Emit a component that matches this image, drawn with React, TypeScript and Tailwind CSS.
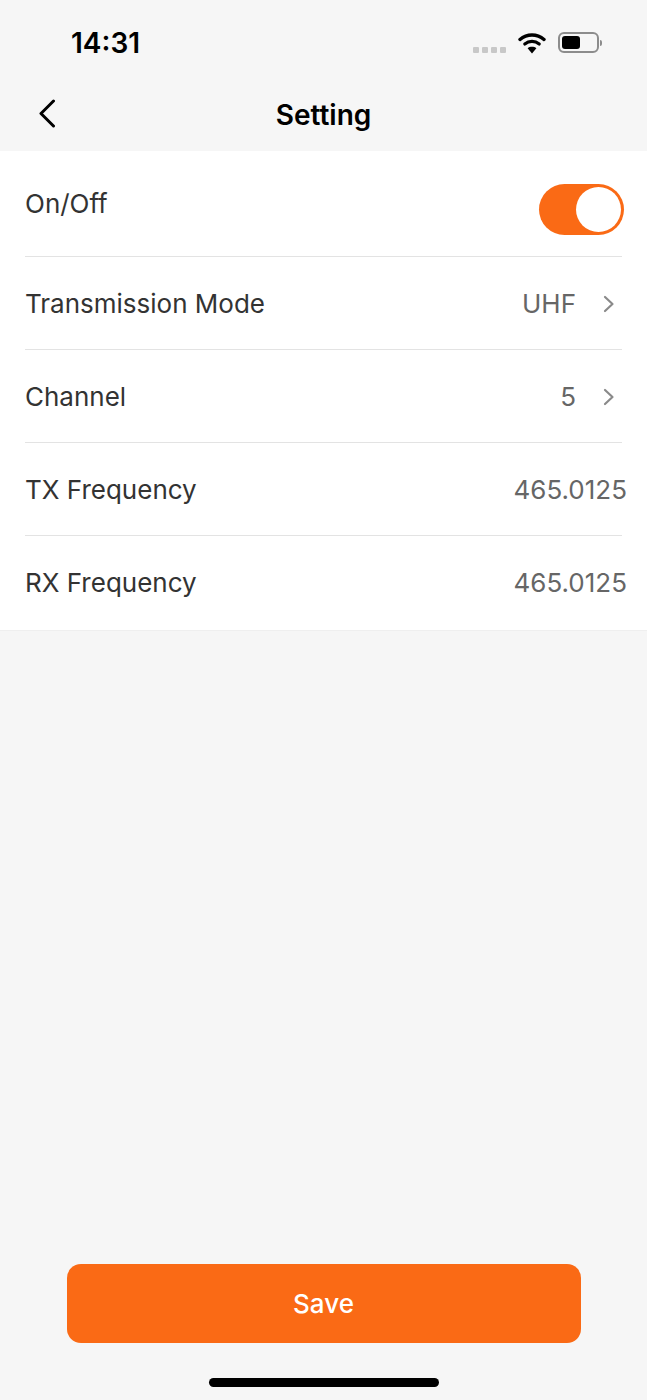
const rows = [
  { label: "Transmission Mode", value: "UHF", arrow: true },
  { label: "Channel", value: "5", arrow: true },
  { label: "TX Frequency", value: "465.0125", arrow: false },
  { label: "RX Frequency", value: "465.0125", arrow: false },
];

function Chevron() {
  return (
    <svg width="12" height="18" viewBox="0 0 12 18" fill="none" className="ml-[27px] mr-[9px]">
      <path d="M2 2 L9.5 9 L2 16" stroke="#8a8a8a" strokeWidth="2.2" strokeLinecap="round" strokeLinejoin="round" />
    </svg>
  );
}

function StatusIcons() {
  return (
    <div className="flex items-center">
      <div className="flex gap-[3px] mt-[14px]">
        <span className="w-[6px] h-[6px] rounded-[1px] bg-[#c8c8c8]" />
        <span className="w-[6px] h-[6px] rounded-[1px] bg-[#c8c8c8]" />
        <span className="w-[6px] h-[6px] rounded-[1px] bg-[#c8c8c8]" />
        <span className="w-[6px] h-[6px] rounded-[1px] bg-[#c8c8c8]" />
      </div>
      <svg width="28" height="22" viewBox="0 0 28 22" fill="none" className="ml-[12px]">
        <path d="M2 7.5 C9 1.5 19 1.5 26 7.5" stroke="#000" strokeWidth="3.4" strokeLinecap="round" />
        <path d="M6.8 12 C11 8.6 17 8.6 21.2 12" stroke="#000" strokeWidth="3.2" strokeLinecap="round" />
        <path d="M14 21.5 L9.6 16.2 C12 14.4 16 14.4 18.4 16.2 Z" fill="#000" />
      </svg>
      <div className="ml-[12px] flex items-center">
        <div className="w-[41px] h-[21px] rounded-[6px] border-2 border-[#8c8c8c] p-[2px]">
          <div className="w-[18px] h-full rounded-[3px] bg-black" />
        </div>
        <div className="ml-[1px] w-[2px] h-[6px] rounded-r-[2px] bg-[#8c8c8c]" />
      </div>
    </div>
  );
}

export default function App() {
  return (
    <div className="h-[1400px] w-full flex flex-col bg-[#f6f6f6] font-['Inter','Liberation_Sans',sans-serif] overflow-hidden">
      <div className="h-[85px] flex items-center justify-between pl-[71px] pr-[45px]">
        <span className="text-[28px] font-semibold text-black">14:31</span>
        <StatusIcons />
      </div>
      <div className="h-[66px] relative flex items-center justify-center pb-[6px]">
        <svg width="18" height="30" viewBox="0 0 18 30" fill="none" className="absolute left-[38px] top-[14px]">
          <path d="M15.5 2 L3 14.5 L15.5 27" stroke="#000" strokeWidth="3" strokeLinecap="round" strokeLinejoin="round" />
        </svg>
        <span className="text-[28px] font-semibold text-black">Setting</span>
      </div>

      <div className="bg-white border-b border-[#efefef] pl-[25px]">
        <div className="h-[105px] pr-[23px] flex items-center justify-between">
          <span className="text-[26px] text-[#333333]">On/Off</span>
          <div className="mt-[12px] w-[85px] h-[51px] rounded-full bg-[#fa6a15] flex items-center justify-end pr-[3px]">
            <div className="w-[45px] h-[45px] rounded-full bg-white" />
          </div>
        </div>
        {rows.map((row, i) => (
          <div key={row.label}>
            <div className="h-px mr-[25px] bg-[#e3e3e3]" />
            <div className={`flex items-center justify-between ${i === 3 ? "h-[94px] pb-[1px]" : "h-[92px] pt-[1px]"}`}>
              <span className="text-[26px] text-[#333333]">{row.label}</span>
              {row.arrow ? (
                <div className="flex items-center pr-[23px]">
                  <span className="text-[26px] text-[#666666]">{row.value}</span>
                  <Chevron />
                </div>
              ) : (
                <span className="text-[26px] text-[#666666] pr-[20px]">{row.value}</span>
              )}
            </div>
          </div>
        ))}
      </div>

      <div className="flex-1" />

      <div className="flex flex-col items-center">
        <button className="w-[514px] h-[79px] rounded-[14px] bg-[#fa6a15] text-white text-[26px] font-medium">Save</button>
        <div className="mt-[35px] mb-[13px] w-[230px] h-[9px] rounded-full bg-black" />
      </div>
    </div>
  );
}
